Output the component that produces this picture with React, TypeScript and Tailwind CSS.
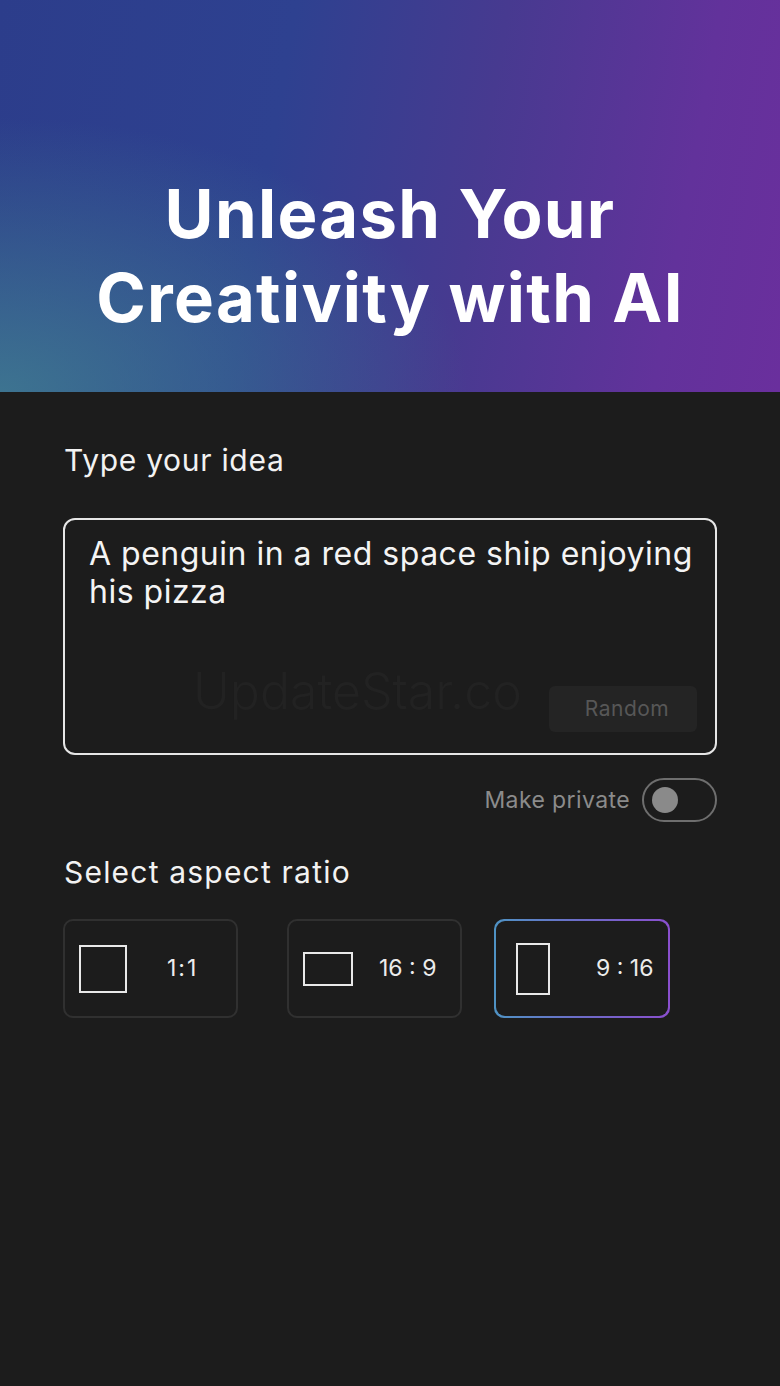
import React from "react";

const ratios = [
  { label: "1:1", box: "w-[48px] h-[48px]", text: "ml-[40px] tracking-[2px]", selected: false },
  { label: "16 : 9", box: "w-[50px] h-[34px]", text: "ml-[26px]", selected: false },
  { label: "9 : 16", box: "w-[34px] h-[52px]", text: "ml-[46px]", selected: true },
];

const RatioCard: React.FC<{ label: string; box: string; text: string; selected: boolean; className?: string }> = ({
  label,
  box,
  text,
  selected,
  className,
}) => {
  if (selected) {
    return (
      <div className={`h-[99px] w-[176px] rounded-[10px] bg-[linear-gradient(90deg,#4f93c4,#6d6bc8,#8a4fce)] p-[2px] ${className ?? ""}`}>
        <div className="flex h-full items-center rounded-[9px] bg-[#1c1c1c] pl-[20px]">
          <div className={`${box} border-2 border-[#e8e8e8]`} />
          <span className={`${text} text-[23px] text-[#ececec]`}>{label}</span>
        </div>
      </div>
    );
  }
  return (
    <div className={`h-[99px] w-[175px] rounded-[10px] border-2 border-[#303030] ${className ?? ""}`}>
      <div className="flex h-full items-center pl-[14px]">
        <div className={`${box} border-2 border-[#e8e8e8]`} />
        <span className={`${text} text-[23px] text-[#ececec]`}>{label}</span>
      </div>
    </div>
  );
};

export default function App() {
  return (
    <div className="min-h-[1386px] bg-[#1c1c1c] font-['Inter',sans-serif]">
      <header className="flex h-[392px] flex-col items-center justify-end bg-[radial-gradient(ellipse_60%_70%_at_0%_100%,rgba(64,125,145,0.85),transparent),linear-gradient(100deg,#2c3d8b_0%,#2e4190_35%,#473a90_60%,#62329b_85%,#6a2f9d_100%)] pb-[52px]">
        <h1 className="text-center text-[67px] font-bold leading-[84px] tracking-[1.3px] text-white">
          Unleash Your
          <br />
          Creativity with AI
        </h1>
      </header>

      <main className="px-[63px] pt-[52px]">
        <h2 className="pl-px text-[30px] leading-[32px] tracking-[0.7px] text-[#f2f2f2]">Type your idea</h2>

        <div className="relative mt-[42px] h-[237px] rounded-[12px] border-2 border-[#e6e6e6] pl-[24px] pr-[10px] pt-[15px]">
          <p className="text-[32px] leading-[38px] tracking-[0.5px] text-[#f4f4f4]">
            A penguin in a red space ship enjoying his pizza
          </p>
          <span className="absolute left-[128px] top-[146px] text-[50px] font-light leading-none text-[#222]">UpdateStar.co</span>
          <button className="absolute right-[18px] top-[166px] h-[46px] w-[148px] rounded-[6px] bg-[#242424] pl-[8px] text-[21px] tracking-[0.5px] text-[#575757]">
            Random
          </button>
        </div>

        <div className="mt-[23px] flex items-center justify-end gap-[12px]">
          <span className="text-[23px] tracking-[0.4px] text-[#8b8b8b]">Make private</span>
          <div className="flex h-[44px] w-[75px] items-center rounded-full border-2 border-[#6e6e6e] pl-[8px]">
            <div className="h-[26px] w-[26px] rounded-full bg-[#8a8a8a]" />
          </div>
        </div>

        <h2 className="mt-[34px] pl-px text-[30px] leading-[32px] tracking-[1.2px] text-[#f2f2f2]">Select aspect ratio</h2>

        <div className="mt-[31px] flex">
          <RatioCard {...ratios[0]} />
          <RatioCard {...ratios[1]} className="ml-[49px]" />
          <RatioCard {...ratios[2]} className="ml-[32px]" />
        </div>
      </main>
    </div>
  );
}
